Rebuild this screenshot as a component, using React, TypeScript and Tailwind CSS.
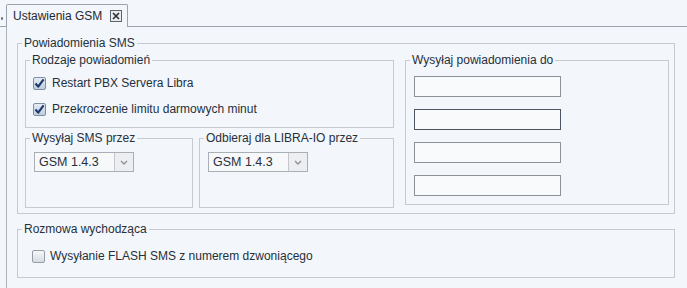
import React from 'react';

const font = { fontFamily: '"Liberation Sans", Arial, sans-serif' };

interface GroupProps {
  title: string;
  className?: string;
  children: React.ReactNode;
}

const Group: React.FC<GroupProps> = ({ title, className = '', children }) => (
  <fieldset className={`border border-[#c6cbd1] min-w-0 ${className}`}>
    <legend className="ml-[4px] px-[2px] text-[12px] leading-[14px] text-[#26303a]">{title}</legend>
    {children}
  </fieldset>
);

const CheckBox: React.FC<{ checked?: boolean; label: string; gap?: string }> = ({ checked, label, gap = 'gap-[6px]' }) => (
  <div className={`flex h-[26px] items-center ${gap}`}>
    {checked ? (
      <div className="flex h-[13px] w-[13px] items-center justify-center rounded-[2px] border border-[#7f8fa1] bg-gradient-to-b from-[#e4ecf5] to-[#bfcddc]">
        <svg width="11" height="11" viewBox="0 0 11 11">
          <path d="M1.5 5.5 L4.2 8.6 L9.6 1.4" fill="none" stroke="#1d3a6c" strokeWidth="2.2" strokeLinejoin="round" />
        </svg>
      </div>
    ) : (
      <div className="h-[13px] w-[13px] rounded-[2px] border border-[#959da6] bg-gradient-to-b from-[#f7f8f9] to-[#d6dadf]" />
    )}
    <span className="text-[12px] text-[#26303a]">{label}</span>
  </div>
);

const Combo: React.FC<{ value: string }> = ({ value }) => (
  <div className="flex h-[20px] w-[100px] border border-[#a9afb5] bg-[#f7f8fa]">
    <div className="flex flex-1 items-center pl-[4px] text-[12.5px] text-[#26303a]">{value}</div>
    <div className="flex w-[19px] items-center justify-center border-l border-[#c3c7cc] bg-[#eceef1]">
      <svg width="8" height="5" viewBox="0 0 8 5">
        <path d="M1 1 L4 4 L7 1" fill="none" stroke="#8a9198" strokeWidth="1.4" />
      </svg>
    </div>
  </div>
);

const Field: React.FC<{ focused?: boolean }> = ({ focused }) => (
  <div className={`h-[21px] w-[147px] border bg-[#f9fafc] ${focused ? 'border-[#4d5763]' : 'border-[#8b929a]'}`} />
);

export default function App() {
  return (
    <div className="h-[288px] w-[687px] overflow-hidden bg-[#f3f6fa]" style={font}>
      {/* tab strip */}
      <div className="flex h-[27px] items-end">
        <div className="h-[27px] w-[6px] border-b border-[#9ba4ae] pl-[1px] pt-[17px]">
          <div className="h-[3px] w-[2px] rounded-[1px] bg-[#6c757e]" />
        </div>
        <div className="flex h-[23px] w-[122px] shrink-0 items-center overflow-hidden whitespace-nowrap rounded-t-[2px] border border-b-0 border-[#9ba4ae] bg-[#f3f6fa] pl-[6px]">
          <span className="text-[12px] text-[#1f2933]">Ustawienia GSM</span>
          <svg className="ml-[8px] shrink-0" width="12" height="12" viewBox="0 0 12 12">
            <rect x="0.5" y="0.5" width="11" height="11" fill="#e9ecef" stroke="#5d6670" />
            <path d="M3 3 L9 9 M9 3 L3 9" stroke="#2b333b" strokeWidth="1.7" />
          </svg>
        </div>
        <div className="h-[27px] flex-1 border-b border-[#9ba4ae]" />
      </div>

      {/* panel */}
      <div className="ml-[6px] h-[261px] border-l border-[#aab2ba] pl-[10px] pt-[9px]">
        <Group title="Powiadomienia SMS" className="w-[658px]">
          <div className="flex items-start pb-[5px] pl-[7px] pr-[5px] pt-[3px]">
            <div className="flex w-[369px] flex-col">
              <Group title="Rodzaje powiadomień">
                <div className="pb-[5px] pl-[7px] pt-[3px]">
                  <CheckBox checked label="Restart PBX Servera Libra" />
                  <CheckBox checked label="Przekroczenie limitu darmowych minut" />
                </div>
              </Group>
              <div className="mt-[3px] flex gap-[6px]">
                <Group title="Wysyłaj SMS przez" className="w-[168px]">
                  <div className="pb-[35px] pl-[8px] pt-[7px]">
                    <Combo value="GSM 1.4.3" />
                  </div>
                </Group>
                <Group title="Odbieraj dla LIBRA-IO przez" className="w-[195px]">
                  <div className="pb-[35px] pl-[8px] pt-[7px]">
                    <Combo value="GSM 1.4.3" />
                  </div>
                </Group>
              </div>
            </div>
            <Group title="Wysyłaj powiadomienia do" className="ml-[11px] w-[264px]">
              <div className="flex flex-col gap-[12px] pb-[8px] pl-[8px] pt-[9px]">
                <Field />
                <Field focused />
                <Field />
                <Field />
              </div>
            </Group>
          </div>
        </Group>

        <Group title="Rozmowa wychodząca" className="mt-[8px] w-[658px]">
          <div className="pb-[8px] pl-[14px] pt-[7px]">
            <CheckBox label="Wysyłanie FLASH SMS z numerem dzwoniącego" gap="gap-[5px]" />
          </div>
        </Group>
      </div>
    </div>
  );
}
